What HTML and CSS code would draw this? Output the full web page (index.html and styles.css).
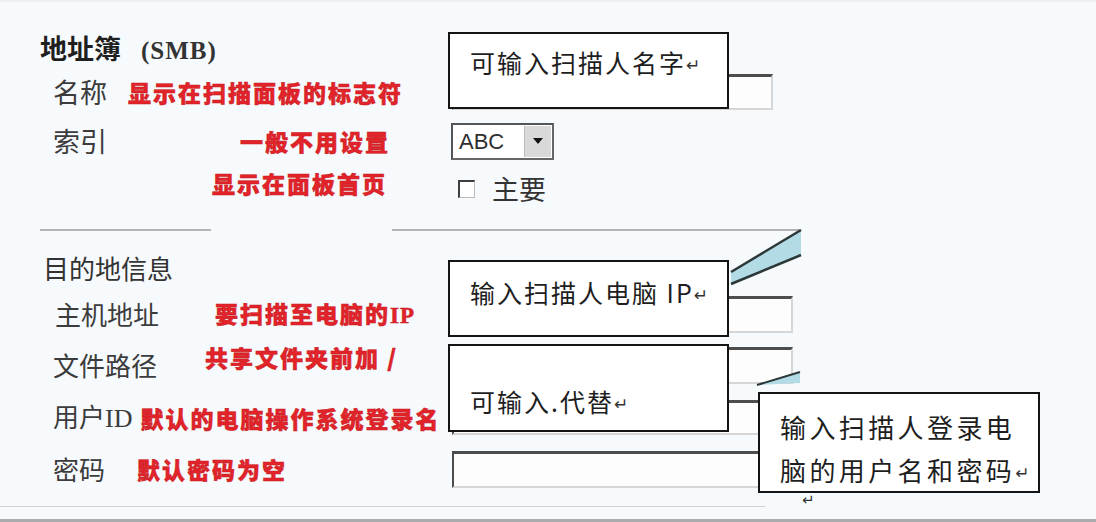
FILE: index.html
```html
<!DOCTYPE html>
<html lang="zh-CN">
<head>
<meta charset="utf-8">
<title>地址簿 (SMB)</title>
<link rel="stylesheet" href="styles.css">
</head>
<body>
<main class="sheet">
  <section class="book">
    <h1 class="book-title">地址簿<span class="proto">(SMB)</span></h1>
    <div class="row row-name">
      <div class="lead"><span class="label">名称</span><span class="note note-name">显示在扫描面板的标志符</span></div>
      <span class="field field-name"></span>
    </div>
    <div class="row row-index">
      <div class="lead"><span class="label">索引</span><span class="note note-index">一般不用设置</span></div>
      <span class="select">
        <span class="select-value">ABC</span>
        <span class="select-btn"><svg width="12" height="8" viewBox="0 0 12 8"><path d="M1 1h10L6 7z" fill="#111"/></svg></span>
      </span>
    </div>
    <div class="row row-main">
      <div class="lead"><span class="note note-main">显示在面板首页</span></div>
      <span class="check"><span class="check-box"></span><span class="check-text">主要</span></span>
    </div>
  </section>

  <div class="divider"><span class="rule rule-left"></span><span class="rule rule-right"></span></div>

  <section class="dest">
    <h2 class="dest-title">目的地信息</h2>
    <div class="row row-host">
      <div class="lead"><span class="label label-host">主机地址</span><span class="note note-host">要扫描至电脑的<span class="latin">IP</span></span></div>
      <span class="field field-wide"></span>
    </div>
    <div class="row row-path">
      <div class="lead"><span class="label">文件路径</span><span class="note note-path">共享文件夹前加 /</span></div>
      <span class="field field-wide"></span>
    </div>
    <div class="row row-user">
      <div class="lead"><span class="label">用户<span class="latin-id">ID</span></span><span class="note note-user">默认的电脑操作系统登录名</span></div>
      <span class="field field-long field-user"></span>
    </div>
    <div class="row row-pass">
      <div class="lead"><span class="label">密码</span><span class="note note-pass">默认密码为空</span></div>
      <span class="field field-long"></span>
    </div>
  </section>

  <div class="base-rule"></div>
  <div class="frame-edge"></div>

  <!-- pointer bands of the callouts -->
  <svg class="pointer pointer-host" width="74" height="60" viewBox="0 0 74 60">
    <polygon points="2,44 72,2 72,27 2,56" fill="#b3dbe5"/>
    <line x1="2" y1="44" x2="72" y2="2" stroke="#2c3838" stroke-width="2.5"/>
    <line x1="2" y1="56" x2="72" y2="27" stroke="#2c3838" stroke-width="2.5"/>
  </svg>
  <svg class="pointer pointer-path" width="46" height="16" viewBox="0 0 46 16">
    <polygon points="1,15 44,2 44,13" fill="#b3dbe5"/>
    <line x1="1" y1="15" x2="44" y2="2" stroke="#2c3838" stroke-width="2"/>
  </svg>

  <div class="callout callout-name">可输入扫描人名字<span class="ret">↵</span></div>
  <div class="callout callout-host">输入扫描人电脑 IP<span class="ret">↵</span></div>
  <div class="callout callout-path">可输入.代替<span class="ret">↵</span></div>
  <div class="callout callout-login">输入扫描人登录电<br>脑的用户名和密码<span class="ret">↵</span></div>
  <span class="stray-ret">↵</span>
</main>
</body>
</html>
```

FILE: styles.css
```css
html, body {
  margin: 0;
  padding: 0;
  background: #f7fafc;
}

.sheet {
  position: relative;
  width: 1096px;
  height: 522px;
  box-sizing: border-box;
  padding-left: 40px;
  border-top: 2px solid #eceff1;
  background: #f7fafc;
  overflow: hidden;
  font-family: "Noto Sans CJK SC", "Noto Sans", sans-serif;
  color: #3a3a3a;
}

/* ---------- headings ---------- */
.book-title {
  margin: 31px 0 0;
  height: 30px;
  line-height: 30px;
  font-size: 27px;
  font-weight: 700;
  color: #1f1f1f;
}

.proto {
  margin-left: 20px;
  font-family: "Liberation Serif", serif;
  font-size: 25px;
  letter-spacing: 1px;
  color: #333;
}

.dest-title {
  margin: 15px 0 0;
  padding-left: 3px;
  height: 44px;
  line-height: 44px;
  font-size: 26px;
  font-weight: 400;
  color: #333;
}

/* ---------- form rows ---------- */
.row {
  display: grid;
  grid-template-columns: 412px auto;
  align-items: center;
  justify-items: start;
}

.row-name { margin-top: 4px; height: 50px; }
.row-index { height: 48px; }
.row-main { height: 48px; }
.row-host { height: 48px; }
.row-path { height: 54px; }
.row-user { height: 51px; }
.row-pass { height: 52px; }

.lead {
  display: flex;
  align-items: center;
  white-space: nowrap;
}

.label {
  padding-left: 13px;
  font-size: 27px;
  line-height: 32px;
  color: #3c3c3c;
}

.dest .label { font-size: 26px; }
.dest .label-host { padding-left: 15px; }

.latin-id {
  font-family: "Liberation Serif", serif;
}

/* red annotations */
.note {
  font-size: 23px;
  line-height: 26px;
  font-weight: 900;
  letter-spacing: 2px;
  color: #e2232a;
  -webkit-text-stroke: 0.5px #c81c22;
}

.note .latin {
  font-family: "Liberation Serif", serif;
  font-weight: 700;
  letter-spacing: 1px;
}

.note-name { margin-left: 21px; }
.note-index { margin-left: 133px; }
.note-main { margin-left: 172px; margin-bottom: 12px; }
.note-host { margin-left: 56px; }
.note-path { margin-left: 48px; margin-bottom: 16px; }
.note-user { margin-left: 8px; }
.note-pass { margin-left: 32px; }

/* ---------- inputs ---------- */
.field {
  display: block;
  box-sizing: border-box;
  height: 36px;
  border-top: 3px solid #4d4d4d;
  border-left: 2px solid #4d4d4d;
  border-right: 2px solid #d6d6d6;
  border-bottom: 2px solid #d6d6d6;
  background: #fdfdfd;
}

.field-name { width: 321px; }
.field-wide { width: 341px; height: 37px; }
.field-long { width: 520px; height: 37px; }
.field-user { height: 35px; }

.select {
  display: flex;
  align-items: stretch;
  box-sizing: border-box;
  width: 103px;
  height: 37px;
  margin-left: -1px;
  border: 2px solid #555;
  border-right-color: #666;
  border-bottom-color: #666;
  background: #fff;
}

.select-value {
  flex: 1;
  padding-left: 6px;
  font-family: "Liberation Sans", sans-serif;
  font-size: 22px;
  line-height: 33px;
  color: #2e2e2e;
}

.select-btn {
  display: flex;
  align-items: center;
  justify-content: center;
  width: 26px;
  margin: 1px;
  background: #d9d9d9;
  border-left: 1px solid #bdbdbd;
}

.check {
  display: flex;
  align-items: center;
  margin-left: 6px;
}

.check-box {
  box-sizing: border-box;
  width: 17px;
  height: 18px;
  border-top: 2px solid #3e3e3e;
  border-left: 2px solid #3e3e3e;
  border-right: 1px solid #bbb;
  border-bottom: 1px solid #bbb;
  background: #fff;
}

.check-text {
  margin-left: 17px;
  font-size: 27px;
  line-height: 32px;
  color: #333;
}

/* ---------- rules ---------- */
.divider {
  display: flex;
  margin-top: 16px;
  height: 2px;
}

.rule { display: block; height: 2px; background: #b4b4b4; }
.rule-left { width: 171px; }
.rule-right { width: 408px; margin-left: 181px; }

.base-rule {
  margin: 11px 0 0 -40px;
  width: 765px;
  height: 1px;
  background: #cfd2d4;
}

.frame-edge {
  margin: 12px 0 0 -40px;
  width: 1096px;
  height: 3px;
  background: #a9abad;
}

/* ---------- callouts laid over the form ---------- */
.pointer {
  position: absolute;
  display: block;
}

.pointer-host { left: 729px; top: 226px; }
.pointer-path { left: 756px; top: 368px; }

.callout {
  position: absolute;
  box-sizing: border-box;
  border: 2px solid #141414;
  background: #fff;
  padding-left: 20px;
  font-size: 25px;
  line-height: 30px;
  letter-spacing: 2px;
  color: #1e1e1e;
  white-space: nowrap;
}

.callout-name { left: 448px; top: 30px; width: 281px; height: 77px; padding-top: 13px; }
.callout-host { left: 448px; top: 258px; width: 281px; height: 77px; padding-top: 15px; }
.callout-path { left: 448px; top: 342px; width: 281px; height: 88px; padding-top: 40px; }
.callout-login {
  left: 758px;
  top: 390px;
  width: 282px;
  height: 101px;
  padding-top: 11px;
  font-size: 26px;
  line-height: 43px;
  letter-spacing: 3.4px;
}

.ret {
  font-family: "DejaVu Sans", sans-serif;
  font-size: 17px;
  letter-spacing: 0;
  color: #333;
  vertical-align: 2px;
}

.stray-ret {
  position: absolute;
  left: 802px;
  top: 490px;
  font-family: "DejaVu Sans", sans-serif;
  font-size: 15px;
  line-height: 16px;
  color: #333;
}
```
